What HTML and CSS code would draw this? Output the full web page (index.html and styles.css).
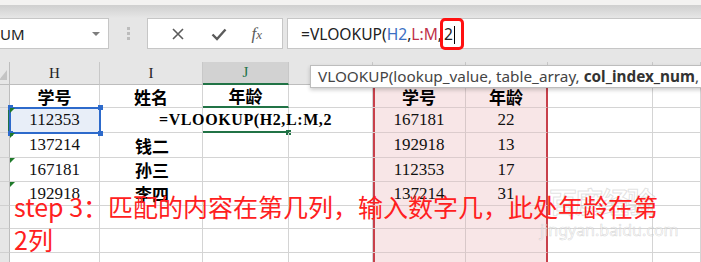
FILE: index.html
```html
<!DOCTYPE html>
<html lang="zh-CN">
<head>
    <meta charset="UTF-8">
    <title>VLOOKUP step 3</title>
    <link rel="stylesheet" href="styles.css">
</head>
<body>
<div class="top-strip"></div>
<div class="shade"></div>

<div class="fbar">
    <div class="namebox">
        <span>UM</span>
        <span class="drop"></span>
    </div>
    <div class="grip"><i></i><i></i><i></i></div>
    <div class="btnbox">
        <svg width="16" height="16" viewBox="0 0 16 16"><path d="M3 3 L13 13 M13 3 L3 13" stroke="#5b5b5b" stroke-width="1.6" fill="none"/></svg>
        <svg width="18" height="16" viewBox="0 0 18 16"><path d="M2.5 8.5 L7 13 L15.5 3.5" stroke="#5b5b5b" stroke-width="2.4" fill="none"/></svg>
        <span class="fx">f<small>x</small></span>
    </div>
    <div class="formula">
        <span class="ftext">=VLOOKUP(<span class="ref-h">H2</span>,<span class="ref-l">L:M</span>,<span class="arg">2<span class="caret"></span></span></span>
    </div>
</div>

<div class="sheet">
    <!-- header -->
    <div class="rh corner"><span class="tri"></span></div>
    <div class="ch">H</div>
    <div class="ch">I</div>
    <div class="ch active">J</div>
    <div class="ch">K</div>
    <div class="ch">L</div>
    <div class="ch">M</div>
    <div class="ch">N</div>
    <div class="ch">O</div>

    <!-- row 1 -->
    <div class="rh"></div>
    <div class="c zh">学号</div>
    <div class="c zh">姓名</div>
    <div class="c zh j-top">年龄</div>
    <div class="c"></div>
    <div class="c zh pl">学号</div>
    <div class="c zh pm">年龄</div>
    <div class="c"></div>
    <div class="c"></div>

    <!-- row 2 -->
    <div class="rh cur"></div>
    <div class="c num sel flag">112353
        <i class="h tl"></i><i class="h tr"></i><i class="h bl"></i><i class="h br"></i>
    </div>
    <div class="c"></div>
    <div class="c edit"><span>=VLOOKUP(H2,L:M,2</span><i class="gh"></i></div>
    <div class="c"></div>
    <div class="c num pl">167181</div>
    <div class="c num pm">22</div>
    <div class="c"></div>
    <div class="c"></div>

    <!-- row 3 -->
    <div class="rh"></div>
    <div class="c num flag">137214</div>
    <div class="c zh name">钱二</div>
    <div class="c"></div>
    <div class="c"></div>
    <div class="c num pl">192918</div>
    <div class="c num pm">13</div>
    <div class="c"></div>
    <div class="c"></div>

    <!-- row 4 -->
    <div class="rh"></div>
    <div class="c num flag">167181</div>
    <div class="c zh name">孙三</div>
    <div class="c"></div>
    <div class="c"></div>
    <div class="c num pl">112353</div>
    <div class="c num pm">17</div>
    <div class="c"></div>
    <div class="c"></div>

    <!-- row 5 -->
    <div class="rh"></div>
    <div class="c num flag">192918</div>
    <div class="c zh name">李四</div>
    <div class="c"></div>
    <div class="c"></div>
    <div class="c num pl">137214</div>
    <div class="c num pm">31</div>
    <div class="c"></div>
    <div class="c"></div>

    <!-- rows 6-8 -->
    <div class="rh"></div><div class="c"></div><div class="c"></div><div class="c"></div><div class="c"></div><div class="c pl"></div><div class="c pm"></div><div class="c"></div><div class="c"></div>
    <div class="rh"></div><div class="c"></div><div class="c"></div><div class="c"></div><div class="c"></div><div class="c pl"></div><div class="c pm"></div><div class="c"></div><div class="c"></div>
    <div class="rh"></div><div class="c"></div><div class="c"></div><div class="c"></div><div class="c"></div><div class="c pl"></div><div class="c pm"></div><div class="c"></div><div class="c"></div>
</div>

<div class="tip">VLOOKUP(lookup_value, table_array, <b>col_index_num</b>, [range_lookup])</div>

<div class="watermark">
    <div class="wm-logo">百度经验</div>
    <div class="wm-url">jingyan.baidu.com</div>
</div>

<div class="note">step 3：匹配的内容在第几列，输入数字几，此处年龄在第<br>2列</div>
</body>
</html>
```

FILE: styles.css
```css
body {
    margin: 0;
    width: 701px;
    height: 262px;
    overflow: hidden;
    background: #e6e6e6;
    position: relative;
    font-family: "Noto Sans", "Open Sans", sans-serif;
}

.top-strip {
    height: 5px;
    background: #f3f2f1;
}
.shade {
    height: 13px;
    background: linear-gradient(#cfcfcf, #e6e6e6);
}

/* formula bar */
.fbar {
    display: flex;
    height: 31px;
}
.namebox {
    width: 109px;
    box-sizing: border-box;
    background: #fff;
    border: 1px solid #c6c6c6;
    border-left: none;
    display: flex;
    align-items: center;
    justify-content: space-between;
    font-size: 15px;
    color: #222;
    padding-right: 8px;
}
.drop {
    width: 0;
    height: 0;
    border-left: 4px solid transparent;
    border-right: 4px solid transparent;
    border-top: 4px solid #7d7d7d;
}
.grip {
    width: 38px;
    display: flex;
    flex-direction: column;
    align-items: center;
    justify-content: center;
    gap: 2px;
}
.grip i {
    width: 3px;
    height: 3px;
    background: #bcbcbc;
}
.btnbox {
    width: 136px;
    box-sizing: border-box;
    background: #fff;
    border: 1px solid #c6c6c6;
    display: flex;
    align-items: center;
    justify-content: space-around;
    padding: 0 8px 0 10px;
}
.fx {
    font-family: "Liberation Serif", serif;
    font-style: italic;
    font-size: 17px;
    color: #5b5b5b;
}
.fx small {
    font-size: 13px;
}
.formula {
    flex: 1;
    margin-left: 4px;
    box-sizing: border-box;
    background: #fff;
    border: 1px solid #c6c6c6;
    border-right: none;
    display: flex;
    align-items: center;
    padding-left: 13px;
    font-size: 15.6px;
    color: #222;
}
.ftext {
    white-space: nowrap;
}
.ref-h { color: #3b6fc4; }
.ref-l { color: #c0314a; }
.arg {
    margin-left: 2px;
    position: relative;
}
.arg::after {
    content: "";
    position: absolute;
    left: -4px;
    top: 50%;
    width: 24px;
    height: 32px;
    margin-top: -16px;
    box-sizing: border-box;
    border: 3px solid #ff1010;
    border-radius: 5px;
}
.caret {
    display: inline-block;
    width: 1px;
    height: 18px;
    background: #000;
    vertical-align: -4px;
    margin-left: 1px;
}

/* sheet */
.sheet {
    margin-top: 13px;
    display: grid;
    grid-template-columns: 10px 90px 103px 86px 84px 93px 82px 105px 48px;
    grid-template-rows: 23px 23px 25px 25px 24px 24px 23px 24px 24px;
    background: #fff;
}
.rh {
    background: #e6e6e6;
    border-right: 1px solid #bdbdbd;
    border-bottom: 1px solid #d0d0d0;
}
.rh.cur {
    border-right: 2px solid #217346;
}
.corner {
    position: relative;
    border-bottom: 1px solid #bdbdbd;
}
.tri {
    position: absolute;
    right: 2px;
    bottom: 4px;
    width: 0;
    height: 0;
    border-left: 8px solid transparent;
    border-bottom: 10px solid #c4c4c4;
}
.ch {
    background: #e6e6e6;
    border-right: 1px solid #c8c8c8;
    border-bottom: 1px solid #bdbdbd;
    display: flex;
    align-items: center;
    justify-content: center;
    font-family: "Liberation Serif", serif;
    font-size: 15px;
    color: #222;
}
.ch.active {
    background: #d2d2d2;
    color: #217346;
    border-bottom: 2px solid #217346;
}
.c {
    border-right: 1px solid #d4d4d4;
    border-bottom: 1px solid #d4d4d4;
    display: flex;
    align-items: center;
    justify-content: center;
    position: relative;
    white-space: nowrap;
    color: #000;
}
.zh {
    font-family: "Noto Sans CJK SC", sans-serif;
    font-weight: bold;
    font-size: 17px;
}
.name {
    justify-content: flex-start;
    padding-left: 35px;
}
.num {
    font-family: "Liberation Serif", serif;
    font-size: 17px;
    color: #111;
}
.pl {
    background: #f8e6e7;
    border-right-color: #d8c8c9;
    border-bottom-color: #dccccd;
    box-shadow: inset 2px 0 #c8404b;
}
.pm {
    background: #f8e6e7;
    border-right: 2px solid #c8404b;
    border-bottom-color: #dccccd;
}
.j-top {
    border-bottom: 2px solid #217346;
}
.edit {
    border-bottom: 2px solid #217346;
}
.edit span {
    font-family: "Liberation Serif", serif;
    font-weight: bold;
    font-size: 16px;
    letter-spacing: 0.6px;
}
.gh {
    position: absolute;
    right: -3px;
    bottom: -4px;
    width: 5px;
    height: 5px;
    background: #217346;
}
.sel {
    background: #e8eef8;
}
.sel::after {
    content: "";
    position: absolute;
    left: -1px;
    top: -1px;
    right: -2px;
    bottom: -2px;
    border: 2px solid #2d6acb;
}
.h {
    position: absolute;
    width: 5px;
    height: 5px;
    background: #2d6acb;
    z-index: 1;
}
.tl { left: -2px; top: -3px; }
.tr { right: -4px; top: -3px; }
.bl { left: -2px; bottom: -4px; }
.br { right: -4px; bottom: -4px; }
.flag::before {
    content: "";
    position: absolute;
    left: 0;
    top: 0;
    width: 0;
    height: 0;
    border-top: 5px solid #1f7a2a;
    border-right: 5px solid transparent;
    z-index: 2;
}

/* function tooltip */
.tip {
    position: absolute;
    left: 310px;
    top: 65px;
    width: 400px;
    height: 23px;
    box-sizing: border-box;
    background: #fff;
    border: 1px solid #bdbdbd;
    border-right: none;
    box-shadow: 0 2px 4px rgba(0, 0, 0, 0.2);
    padding-left: 7px;
    font-size: 15.3px;
    line-height: 21px;
    color: #444;
    white-space: nowrap;
    overflow: hidden;
}
.tip b {
    color: #333;
}

/* watermark */
.watermark {
    position: absolute;
    left: 540px;
    top: 182px;
    width: 122px;
    text-align: center;
}
.wm-logo {
    font-family: "Noto Sans CJK SC", sans-serif;
    font-weight: bold;
    font-size: 28px;
    line-height: 38px;
    letter-spacing: -2px;
    color: rgba(255, 255, 255, 0.5);
    -webkit-text-stroke: 1px rgba(170, 170, 170, 0.35);
}
.wm-url {
    font-size: 16px;
    line-height: 20px;
    color: rgba(255, 255, 255, 0.5);
    -webkit-text-stroke: 0.6px rgba(170, 170, 170, 0.45);
}

/* annotation */
.note {
    position: absolute;
    left: 14px;
    top: 190px;
    font-family: "Noto Sans CJK SC", sans-serif;
    font-size: 25px;
    line-height: 33px;
    color: #ff2020;
    white-space: nowrap;
}
```
